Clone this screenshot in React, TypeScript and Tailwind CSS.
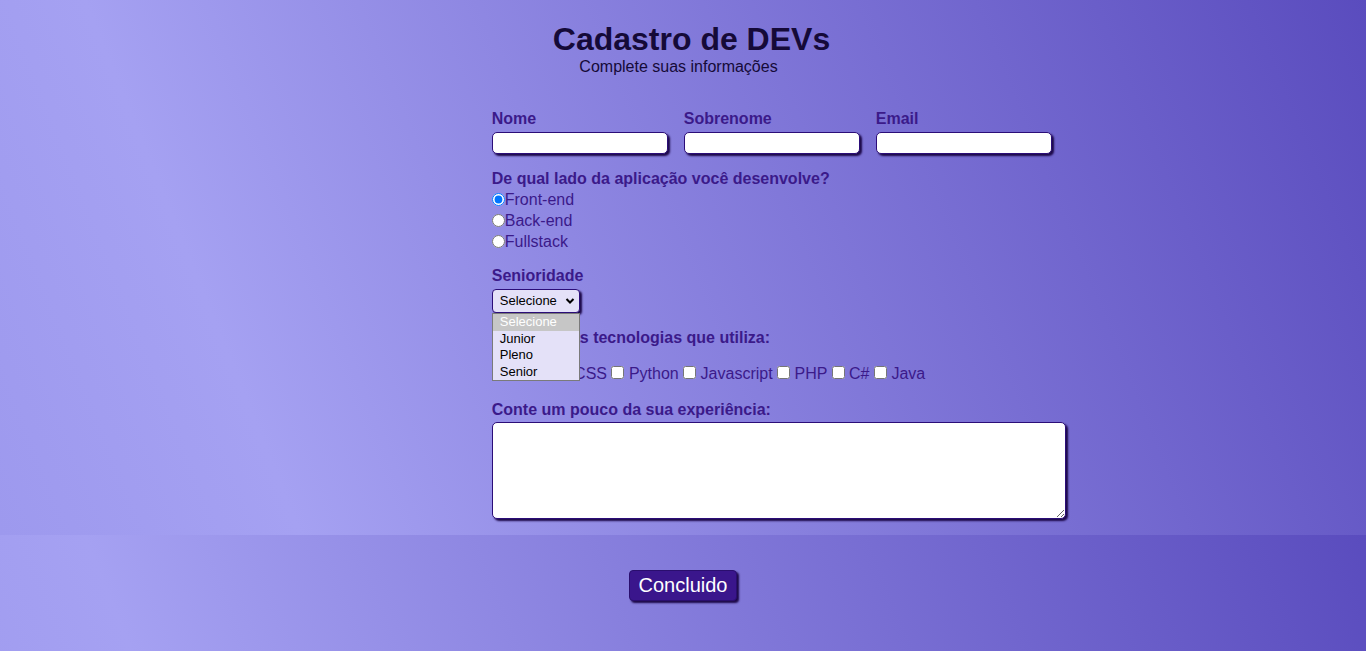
import React from 'react';

const labelCls = 'block text-[16px] leading-[18px] font-bold text-[#3b1a8a]';
const fieldCls =
  'block bg-white border border-[#2b0d78] rounded-[5px] shadow-[2px_2px_2px_#1c0848] outline-none';

const App: React.FC = () => {
  const fields = ['Nome', 'Sobrenome', 'Email'];
  const sides = ['Front-end', 'Back-end', 'Fullstack'];
  const techs = ['HTML', 'CSS', 'Python', 'Javascript', 'PHP', 'C#', 'Java'];
  const levels = ['Selecione', 'Junior', 'Pleno', 'Senior'];

  return (
    <div className="min-h-[651px] bg-[linear-gradient(68deg,#9d99ee_0%,#a5a1f2_19%,#5a4cbe_100%)] bg-[length:100%_535px] bg-repeat-y font-['Liberation_Sans',Arial,sans-serif]">
      <header className="flex flex-col items-center pt-[21px]">
        <h1 className="ml-[17px] text-[32px] leading-[37px] font-bold text-[#150a38]">Cadastro de DEVs</h1>
        <p className="mr-[9px] text-[16px] leading-[18px] text-[#150a38]">Complete suas informações</p>
      </header>

      <form className="ml-[36%] w-[574px]" onSubmit={(e) => e.preventDefault()}>
        <div className="mt-[34px] flex gap-4">
          {fields.map((f) => (
            <div key={f} className="flex w-[176px] flex-col gap-1">
              <label className={labelCls}>{f}</label>
              <input type="text" className={`${fieldCls} h-[22px] w-[176px] px-1 text-[14px]`} />
            </div>
          ))}
        </div>

        <label className={`${labelCls} mt-4`}>De qual lado da aplicação você desenvolve?</label>
        <div className="mt-[1px] flex flex-col">
          {sides.map((s, i) => (
            <div key={s} className="flex h-[21px] items-center text-[16px] text-[#3b1a8a]">
              <input type="radio" name="lado" defaultChecked={i === 0} className="m-0 h-[13px] w-[13px]" />
              <span className="leading-[18px]">{s}</span>
            </div>
          ))}
        </div>

        <label className={`${labelCls} mt-[15px]`}>Senioridade</label>
        <div className="relative mt-[4px] w-[88px]">
          <select className="block h-[24px] w-[88px] appearance-none rounded-[4px] border border-[#2b0d78] bg-[#e4e1f8] pl-[7px] text-[13px] text-black shadow-[2px_2px_2px_#1c0848] outline-none">
            {levels.map((l) => (
              <option key={l}>{l}</option>
            ))}
          </select>
          <svg
            className="pointer-events-none absolute right-[5px] top-[8px]"
            width="10"
            height="8"
            viewBox="0 0 10 8"
          >
            <path d="M1.5 2 L5 5.5 L8.5 2" fill="none" stroke="#000" strokeWidth="2" />
          </svg>
          <ul className="absolute left-0 top-[24px] z-10 w-[88px] border border-[#7a7a7a] bg-[#e4e1f8] text-[13px] text-black">
            {levels.map((l, i) => (
              <li
                key={l}
                className={`h-[16.5px] pl-[7px] leading-[16.5px] ${i === 0 ? 'bg-[#c6c6c6] text-white' : ''}`}
              >
                {l}
              </li>
            ))}
          </ul>
        </div>

        <label className={`${labelCls} mt-[16px]`}>Selecione as tecnologias que utiliza:</label>
        <div className="mt-[18px] text-[16px] leading-[18px] text-[#3b1a8a]">
          {techs.map((t, i) => (
            <React.Fragment key={t}>
              {i > 0 ? ' ' : ''}
              <input type="checkbox" className="m-0 h-[13px] w-[13px]" /> {t}
            </React.Fragment>
          ))}
        </div>

        <label className={`${labelCls} mt-[18px]`}>Conte um pouco da sua experiência:</label>
        <textarea className={`${fieldCls} mt-[3px] h-[97px] w-[574px] p-1 text-[14px]`} />
      </form>

      <div className="mt-[51px] flex justify-center">
        <button
          type="submit"
          className="h-[31px] rounded-[4px] border border-[#2a0e6e] bg-[#3a168c] px-[9px] text-[20px] leading-[29px] text-white shadow-[2px_2px_2px_#1c0848]"
        >
          Concluido
        </button>
      </div>
    </div>
  );
};

export default App;
